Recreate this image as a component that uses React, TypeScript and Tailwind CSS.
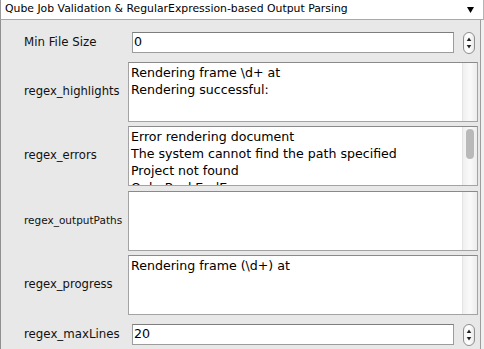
const font = "font-['DejaVu_Sans','Liberation_Sans',sans-serif]";

function Spinner() {
  return (
    <svg width="12" height="22" viewBox="0 0 12 22" className="shrink-0">
      <defs>
        <linearGradient id="spin" x1="0" x2="1" y1="0" y2="0">
          <stop offset="0" stopColor="#f4f4f4" />
          <stop offset="0.5" stopColor="#ffffff" />
          <stop offset="1" stopColor="#e6e6e6" />
        </linearGradient>
      </defs>
      <rect x="0.5" y="0.5" width="11" height="21" rx="5.5" fill="url(#spin)" stroke="#8e8e8e" />
      <path d="M6 5.5 L8.3 9 L3.7 9 Z" fill="#222" />
      <path d="M6 16.5 L8.3 13 L3.7 13 Z" fill="#222" />
    </svg>
  );
}

function NumberRow({ label, value, mt }: { label: string; value: string; mt: string }) {
  return (
    <div className={`flex items-center h-[21px] ${mt}`}>
      <span className="w-[108px] pl-[23px] text-[11.8px] text-[#111]">{label}</span>
      <div className="ml-[23px] w-[322px] h-[21px] bg-white border border-[#9c9c9c] border-t-[#7d7d7d] flex items-center pl-[1px] text-[12.6px] text-black">
        {value}
      </div>
      <div className="ml-[9px]">
        <Spinner />
      </div>
    </div>
  );
}

function AreaRow({
  label,
  lines,
  mt,
  small,
  thumb,
}: {
  label: string;
  lines: string[];
  mt: string;
  small?: boolean;
  thumb?: boolean;
}) {
  return (
    <div className={`flex items-center ${mt}`}>
      <span className={`w-[127px] pl-[23px] text-[#111] ${small ? 'text-[10.5px]' : 'text-[11.6px]'}`}>{label}</span>
      <div className="w-[350px] h-[60px] bg-white border border-[#a3a3a3] border-t-[#8a8a8a] flex overflow-hidden">
        <div className="flex-1 pl-[2px] pt-[1px] text-[12.6px] leading-[17px] text-black whitespace-pre overflow-hidden">
          {lines.map((l, i) => (
            <div key={i}>{l}</div>
          ))}
        </div>
        <div className="w-[15px] h-full border-l border-[#e4e4e4] bg-gradient-to-r from-[#f0f0f0] via-[#fafafa] to-[#ededed] flex justify-center pt-[2px]">
          {thumb && <div className="w-[8px] h-[30px] rounded-full bg-[#b9b9b9]" />}
        </div>
      </div>
    </div>
  );
}

export default function App() {
  return (
    <div className={`w-[484px] h-[349px] bg-[#e8e8e8] overflow-hidden ${font}`}>
      <div className="h-[20px] bg-white border-b border-[#a9a9a9] border-l border-l-[#9a9a9a] border-r border-r-[#b5b5b5] flex items-center justify-between pl-[4px] pr-[9px]">
        <span className="text-[10.85px] text-black">Qube Job Validation &amp; RegularExpression-based Output Parsing</span>
        <svg width="7" height="6" viewBox="0 0 7 6">
          <path d="M0 0 L7 0 L3.5 6 Z" fill="#000" />
        </svg>
      </div>
      <div className="flex h-[329px]">
        <div className="w-[481px] h-full border-l border-[#8f8f8f] border-r border-r-[#9d9d9d]">
          <NumberRow label="Min File Size" value="0" mt="mt-[12px]" />
          <AreaRow
            label="regex_highlights"
            lines={['Rendering frame \\d+ at', 'Rendering successful:']}
            mt="mt-[9px]"
          />
          <AreaRow
            label="regex_errors"
            lines={[
              'Error rendering document',
              'The system cannot find the path specified',
              'Project not found',
              'QubeBackEndError',
            ]}
            mt="mt-[4px]"
            thumb
          />
          <AreaRow label="regex_outputPaths" lines={[]} mt="mt-[5px]" small />
          <AreaRow label="regex_progress" lines={['Rendering frame (\\d+) at']} mt="mt-[4px]" />
          <NumberRow label="regex_maxLines" value="20" mt="mt-[9px]" />
        </div>
        <div className="flex-1 bg-[#f0f0f0]" />
      </div>
    </div>
  );
}
